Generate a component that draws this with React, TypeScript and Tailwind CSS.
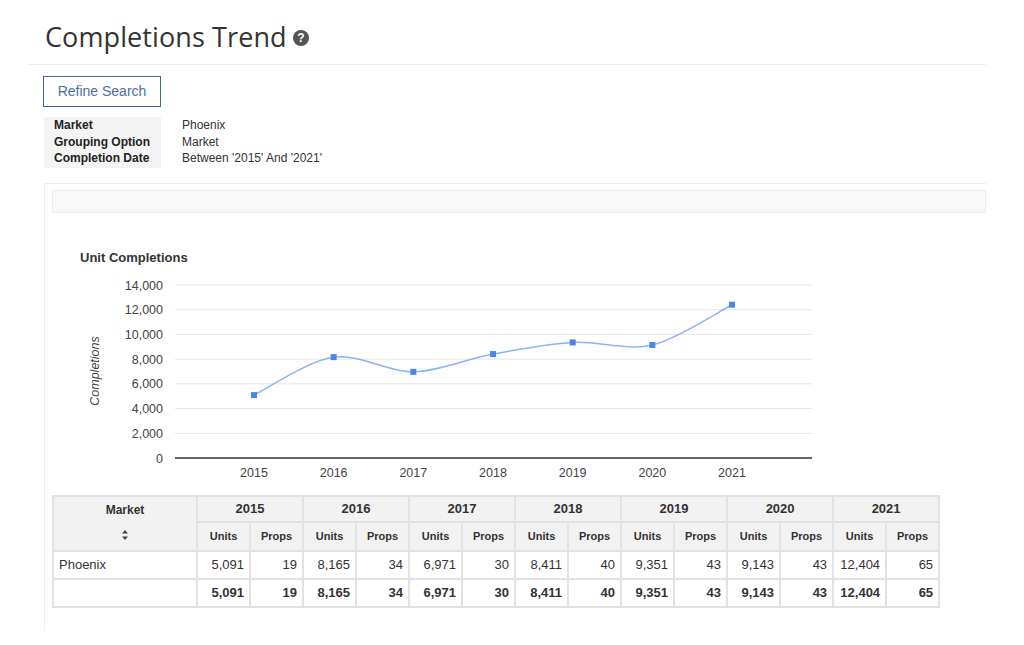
import React from "react";

const years = [2015, 2016, 2017, 2018, 2019, 2020, 2021];
const units = [5091, 8165, 6971, 8411, 9351, 9143, 12404];
const props = [19, 34, 30, 40, 43, 43, 65];

// chart geometry in page coordinates (viewBox trick)
const X0 = 253;
const STEP = 79.67;
const BASE = 457;
const PX_PER = 173 / 14000;

const pts = units.map((v, i) => [X0 + i * STEP, BASE - v * PX_PER]);

const smoothPath = (p: number[][]) => {
  let d = `M${p[0][0]},${p[0][1]}`;
  for (let i = 0; i < p.length - 1; i++) {
    const p0 = p[i - 1] ?? p[i];
    const p1 = p[i];
    const p2 = p[i + 1];
    const p3 = p[i + 2] ?? p2;
    const t = 0.16;
    const c1 = [p1[0] + (p2[0] - p0[0]) * t, p1[1] + (p2[1] - p0[1]) * t];
    const c2 = [p2[0] - (p3[0] - p1[0]) * t, p2[1] - (p3[1] - p1[1]) * t];
    d += ` C${c1[0]},${c1[1]} ${c2[0]},${c2[1]} ${p2[0]},${p2[1]}`;
  }
  return d;
};

const fmt = (n: number) => n.toLocaleString("en-US");

const Chart = () => (
  <svg
    width={780}
    height={255}
    viewBox="44 240 780 255"
    className="block"
    style={{ fontFamily: "'Liberation Sans', Arial, sans-serif" }}
  >
    <text x={79} y={261} fontSize={13} fontWeight="bold" fill="#333">
      Unit Completions
    </text>
    {[14000, 12000, 10000, 8000, 6000, 4000, 2000, 0].map((v) => {
      const y = BASE - v * PX_PER;
      return (
        <g key={v}>
          {v > 0 && <line x1={174} x2={811} y1={y} y2={y} stroke="#e5e5e5" strokeWidth={1} />}
          <text x={162} y={y + 4.5} fontSize={12.5} fill="#444" textAnchor="end">
            {fmt(v)}
          </text>
        </g>
      );
    })}
    <line x1={174} x2={811} y1={BASE} y2={BASE} stroke="#333" strokeWidth={1.5} />
    {years.map((y, i) => (
      <text key={y} x={X0 + i * STEP} y={476} fontSize={12.5} fill="#444" textAnchor="middle">
        {y}
      </text>
    ))}
    <text
      x={0}
      y={0}
      fontSize={12.5}
      fontStyle="italic"
      fill="#444"
      textAnchor="middle"
      transform="translate(98 370) rotate(-90)"
    >
      Completions
    </text>
    <path d={smoothPath(pts)} fill="none" stroke="#8ab4f8" strokeWidth={1.5} />
    {pts.map(([x, y], i) => (
      <rect key={i} x={x - 3} y={y - 3} width={6} height={6} fill="#4a86e8" />
    ))}
  </svg>
);

const th = "border-2 border-[#e2e2e2] bg-[#f2f2f2] font-bold text-[#333]";
const cell = "border-2 border-[#e2e2e2] text-[13px] text-[#333] px-[5px]";
const td = `${cell} text-right`;

const DataTable = () => (
  <table className="border-collapse w-[888px] table-fixed">
    <colgroup>
      <col className="w-[144px]" />
      {years.map((y) => (
        <React.Fragment key={y}>
          <col className="w-[53px]" />
          <col className="w-[53px]" />
        </React.Fragment>
      ))}
    </colgroup>
    <thead>
      <tr className="h-[26px]">
        <th rowSpan={2} className={`${th} text-[12px] align-top pt-[4px]`}>
          <div>Market</div>
          <div className="mt-[10px] flex justify-center">
            <svg width="8" height="12" viewBox="0 0 8 12">
              <path d="M4 1 L7 4.5 H1 Z M4 11 L7 7.5 H1 Z" fill="#444" />
            </svg>
          </div>
        </th>
        {years.map((y) => (
          <th key={y} colSpan={2} className={`${th} text-[13px]`}>
            {y}
          </th>
        ))}
      </tr>
      <tr className="h-[29px]">
        {years.map((y) => (
          <React.Fragment key={y}>
            <th className={`${th} text-[11px]`}>Units</th>
            <th className={`${th} text-[11px]`}>Props</th>
          </React.Fragment>
        ))}
      </tr>
    </thead>
    <tbody>
      <tr className="h-[28px]">
        <td className={`${cell} text-left`}>Phoenix</td>
        {years.map((y, i) => (
          <React.Fragment key={y}>
            <td className={td}>{fmt(units[i])}</td>
            <td className={td}>{props[i]}</td>
          </React.Fragment>
        ))}
      </tr>
      <tr className="h-[28px] font-bold">
        <td className={td}></td>
        {years.map((y, i) => (
          <React.Fragment key={y}>
            <td className={td}>{fmt(units[i])}</td>
            <td className={td}>{props[i]}</td>
          </React.Fragment>
        ))}
      </tr>
    </tbody>
  </table>
);

const App = () => {
  return (
    <div className="w-[1024px] h-[645px] bg-white overflow-hidden font-['Liberation_Sans',Arial,sans-serif] text-[#333]">
      <div className="flex items-center gap-[6px] pl-[45px] pt-[28px] h-[44px]">
        <h1 className="text-[27px] leading-none text-[#333] font-['Open_Sans',sans-serif] font-normal tracking-[0.1px]">
          Completions Trend
        </h1>
        <svg width="16" height="16" viewBox="0 0 16 16" className="mt-[3px]">
          <circle cx="8" cy="8" r="8" fill="#555" />
          <text x="8" y="12.3" fontSize="12" fontWeight="bold" fill="#fff" textAnchor="middle" fontFamily="'Liberation Sans', sans-serif">
            ?
          </text>
        </svg>
      </div>

      <div className="ml-[28px] mt-[20px] w-[958px] border-t border-[#eeeeee]" />

      <div className="pl-[43px] pt-[11px]">
        <button className="h-[31px] w-[118px] border border-[#4767a3] text-[14px] text-[#4a6fa5] bg-white">
          Refine Search
        </button>
      </div>

      <div className="ml-[44px] mt-[10px] flex text-[12px] leading-[16.5px]">
        <div className="w-[117px] bg-[#f4f4f4] pl-[10px] pb-[1px] font-bold text-[#222]">
          <div>Market</div>
          <div>Grouping Option</div>
          <div>Completion Date</div>
        </div>
        <div className="pl-[21px] text-[#333]">
          <div>Phoenix</div>
          <div>Market</div>
          <div>Between '2015' And '2021'</div>
        </div>
      </div>

      <div className="ml-[44px] mt-[15px] w-[942px] h-[448px] border-l border-t border-[#eeeeee] pl-[7px] pt-[6px]">
        <div className="h-[23px] bg-[#f8f8f8] border border-[#ececec]" />
        <div className="mt-[28px] -ml-[7px]">
          <Chart />
        </div>
        <div className="-mt-[1px]">
          <DataTable />
        </div>
      </div>
    </div>
  );
};

export default App;
